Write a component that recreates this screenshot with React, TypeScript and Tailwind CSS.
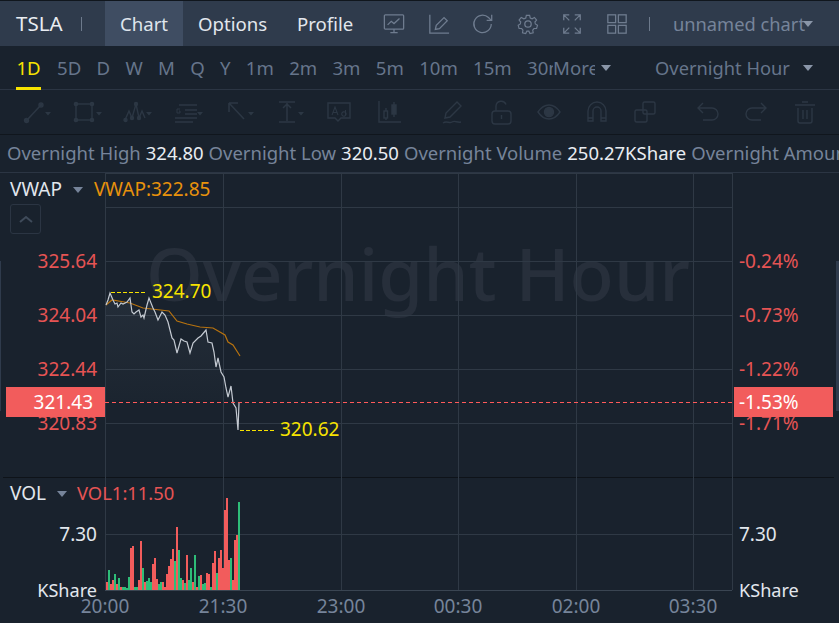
import type { ReactNode } from 'react'

const FONT = "font-['Noto_Sans','Liberation_Sans',sans-serif]"

const intervals = ['5D', 'D', 'W', 'M', 'Q', 'Y', '1m', '2m', '3m', '5m', '10m', '15m']

// white price line, in page coordinates
const pricePoints: [number, number][] = [
  [106, 305], [108, 300], [110, 293], [113, 300], [115, 304], [117, 303], [118, 307], [121, 303], [123, 304], [127, 302], [130, 298], [132, 312], [134, 314], [136, 312], [139, 310], [141, 317], [143, 315], [144, 318], [147, 305], [149, 298], [153, 308], [155, 312], [158, 320], [160, 316], [162, 312], [165, 315], [168, 322], [170, 330], [172, 338], [174, 340], [177, 353], [181, 339], [184, 341], [187, 342], [190, 353], [193, 343], [198, 338], [201, 336], [206, 330], [208, 342], [212, 343], [214, 352], [216, 367], [218, 358], [221, 372], [224, 377], [226, 388], [228, 397], [231, 386], [233, 403], [236, 408], [238, 430], [239, 403],
]

const vwapPoints: [number, number][] = [
  [106, 305], [112, 300], [130, 303], [143, 308], [169, 311], [177, 321], [187, 324], [200, 327], [213, 328], [225, 335], [228, 342], [233, 345], [240, 356],
]

const volumes: [number, 'r' | 'g'][] = [
  [8, 'r'], [20, 'g'], [6, 'r'], [10, 'r'], [16, 'g'], [6, 'r'], [12, 'g'], [3, 'r'], [3, 'g'], [3, 'g'], [2, 'g'], [13, 'g'],
  [42, 'r'], [44, 'r'], [3, 'g'], [3, 'g'], [10, 'r'], [49, 'r'], [22, 'g'], [8, 'r'], [9, 'g'], [12, 'g'], [8, 'g'], [26, 'r'],
  [32, 'r'], [11, 'r'], [6, 'g'], [8, 'g'], [8, 'r'], [3, 'r'], [16, 'r'], [24, 'r'], [31, 'r'], [41, 'r'], [29, 'g'], [63, 'r'],
  [40, 'g'], [12, 'g'], [10, 'r'], [7, 'g'], [35, 'r'], [10, 'g'], [22, 'g'], [8, 'r'], [35, 'g'], [3, 'r'], [14, 'g'], [15, 'r'],
  [6, 'g'], [7, 'g'], [17, 'r'], [16, 'r'], [3, 'g'], [27, 'r'], [39, 'r'], [17, 'g'], [32, 'r'], [40, 'r'], [22, 'r'], [80, 'r'],
  [92, 'r'], [30, 'r'], [32, 'g'], [10, 'r'], [50, 'r'], [55, 'r'], [88, 'g'],
]

const toPath = (pts: [number, number][]) => pts.map(([x, y], i) => `${i ? 'L' : 'M'}${x} ${y}`).join(' ')

function Icon({ children, size = 24 }: { children: ReactNode; size?: number }) {
  return (
    <svg className="overflow-visible" width={size} height={size} viewBox="0 0 24 24" fill="none" stroke="currentColor" strokeWidth="1.4">
      {children}
    </svg>
  )
}

function Caret({ className = '' }: { className?: string }) {
  return <span className={`inline-block w-0 h-0 border-x-[5px] border-x-transparent border-t-[6px] ${className}`} />
}

const toolCaret = <path d="M22 12h6l-3 3.500z" fill="currentColor" stroke="none" />

const topIcons = [
  <><rect x="1.500" y="2" width="21" height="15.500" rx="1" /><path d="M5 13l4-4 3 2.500 6-5.500M8 21.500h8M12 17.500v4" /></>,
  <><path d="M2 2v20h21" /><path d="M8 18l1-4.500L17.500 5l3.500 3.500-8.500 8.500z" /></>,
  <><path d="M21 12a9.500 9.500 0 1 1-3-7l3 3" /><path d="M21.500 2v6h-5.500" /></>,
  <><circle cx="12" cy="12" r="3.500" /><path d="M10 1.500h4l.7 3.200 2.300 1 2.800-1.700 2.600 3.200-2 2.400.5 2.400 2.600 1.600-1.100 3.800-3.100.1-1.600 1.900.6 3.200-3.900 1-1.400-2.900h-2.400l-1.400 2.900-3.900-1 .6-3.200-1.600-1.900-3.100-.1-1.100-3.800 2.600-1.600.5-2.400-2-2.400 2.600-3.200L7 5.700l2.300-1z" transform="translate(1.200 1.200) scale(.9)" /></>,
  <><path d="M3 8V2h6M21 8V2h-6M3 16v6h6M21 16v6h-6M3 2l6 6M21 2l-6 6M3 22l6-6M21 22l-6-6" /></>,
  <><rect x="2" y="2" width="8.500" height="8.500" /><rect x="13.500" y="2" width="8.500" height="8.500" /><rect x="2" y="13.500" width="8.500" height="8.500" /><rect x="13.500" y="13.500" width="8.500" height="8.500" /></>,
]

const toolIcons = [
  <><circle cx="3.500" cy="20.500" r="2" fill="currentColor" /><circle cx="18" cy="5" r="2" fill="currentColor" /><path d="M4 20L18 5" strokeWidth="1.600" />{toolCaret}</>,
  <><rect x="2" y="4" width="16" height="16" /><circle cx="2" cy="4" r="1.600" fill="currentColor" /><circle cx="18" cy="4" r="1.600" fill="currentColor" /><circle cx="2" cy="20" r="1.600" fill="currentColor" /><circle cx="18" cy="20" r="1.600" fill="currentColor" />{toolCaret}</>,
  <><path d="M1 20l4-9 3 7 4-14 3 14 3-7 3 7" /><circle cx="1.500" cy="20" r="1.500" fill="currentColor" /><circle cx="8" cy="18" r="1.500" fill="currentColor" /><circle cx="12" cy="4" r="1.500" fill="currentColor" /><circle cx="15" cy="18" r="1.500" fill="currentColor" />{toolCaret}</>,
  <><path d="M4 5h18M10 10h12M10 14h12M0 18h22M0 22h18" /><path d="M5 9H2v4h3v-2H4" strokeWidth="1" />{toolCaret}</>,
  <><path d="M3 3l15 16M3 3h9M3 3v9" strokeWidth="1.600" />{toolCaret}</>,
  <><path d="M3 2h16M3 22h16M11 3v18M7 8l4-4 4 4" strokeWidth="1.500" />{toolCaret}</>,
  <><path d="M1 3h22v15H14l-3 3-3-3H1z" /><path d="M5 15l3-8 3 8M6 12.500h4M18.500 10v5M18.500 12.500a2.200 2.200 0 1 1-.1-.1" strokeWidth="1.100" /></>,
  <><path d="M1 1v21h22" /><rect x="6" y="11" width="3.500" height="7" /><rect x="14" y="5" width="4" height="9" fill="currentColor" /><path d="M8 8v3M8 18v2M16 2v3M16 14v3" /></>,
  <><path d="M4 18l1-5L16 2l4 4L9 17zM2 23c4-3 6 1 9-1s5 1 9 0" /></>,
  <><rect x="3" y="11" width="19" height="13" rx="3" /><path d="M7 11V6a5.200 5.200 0 0 1 10-1.500M12.500 15v4" /></>,
  <><path d="M1 12c3-4.500 7-7 11-7s8 2.500 11 7c-3 4.500-7 7-11 7s-8-2.500-11-7z" /><circle cx="12" cy="12" r="4.500" fill="currentColor" /></>,
  <><path d="M3 21V11a9 9 0 0 1 18 0v10h-5V11a4 4 0 0 0-8 0v10z" /><path d="M3 18h5M16 18h5" /></>,
  <><rect x="2" y="10" width="12" height="12" rx="1.500" /><rect x="10" y="2" width="12" height="12" rx="1.500" /></>,
  <><path d="M7 3L2 8l5 5M2 8h14a6 6 0 0 1 6 6v0a6 6 0 0 1-6 6H7" /></>,
  <><path d="M17 3l5 5-5 5M22 8H8a6 6 0 0 0-6 6v0a6 6 0 0 0 6 6h9" /></>,
  <><path d="M2 5h20M9 2h6M5 8v13a2 2 0 0 0 2 2h10a2 2 0 0 0 2-2V8M10 10v9M14 10v9" /></>,
]

const hLines = [173, 207, 261, 315, 369, 423, 534]
const vLines = [105, 223, 341, 458, 576, 693, 732]
const timeLabels = ['20:00', '21:30', '23:00', '00:30', '02:00', '03:30']

export default function App() {
  const bars = volumes.map(([h, c], i) => ({ x: 106 + i * 2, h, c }))

  return (
    <div className={`w-[839px] h-[623px] overflow-hidden bg-[#19222d] text-[18.600px] leading-none flex flex-col ${FONT}`}>
      {/* header */}
      <div className="h-[46px] shrink-0 bg-[#2f3b4c] border-t border-[#10161d] flex items-center">
        <span className="ml-[16px] w-[65px] text-[20.500px] text-[#e9edf2]">TSLA</span>
        <span className="w-px h-[14px] bg-[#6d7a8c]" />
        <div className="ml-[23px] h-full w-[78px] flex items-center justify-center bg-[#3f4d62] text-[#dfe5ec] pt-[1px]">Chart</div>
        <span className="ml-[15px] w-[69px] text-[#e2e7ed] pt-[1px]">Options</span>
        <span className="ml-[30px] w-[55px] text-[#e2e7ed] pt-[1px]">Profile</span>
        <div className="ml-[31px] flex gap-[22.600px] text-[#6f7c8f]">
          {topIcons.map((icon, i) => (
            <Icon key={i} size={22}>{icon}</Icon>
          ))}
        </div>
        <span className="ml-[21px] w-px h-[14px] bg-[#6d7a8c]" />
        <span className="ml-[23px] text-[18.300px] pt-[1px] text-[#76849a] whitespace-nowrap w-[130px]">unnamed chart</span>
        <Caret className="border-t-[#8a96a8]" />
      </div>

      {/* interval tabs */}
      <div className="h-[44px] shrink-0 border-b border-[#2b3543] flex items-center relative text-[#66758b] pt-[1px]">
        <div className="ml-[16px] h-full w-[25px] flex items-center justify-center text-[#f7e300] border-b-[3px] border-[#f7e300] pt-[3px] -mb-px">1D</div>
        <div className="ml-[16px] flex gap-[15.300px]">
          {intervals.map((t) => (
            <span key={t}>{t}</span>
          ))}
        </div>
        <span className="ml-[15.300px] w-[26px] overflow-hidden whitespace-nowrap">30m</span>
        <span className="w-[42px] overflow-hidden whitespace-nowrap">More</span>
        <Caret className="ml-[6px] border-t-[#8a96a8]" />
        <span className="ml-[44px] text-[18.300px] whitespace-nowrap w-[134px]">Overnight Hour</span>
        <Caret className="ml-[14px] border-t-[#8a96a8]" />
      </div>

      {/* drawing tools */}
      <div className="h-[45px] shrink-0 border-b border-[#10161d] flex items-center pl-[23px] text-[#2c3744]">
        {toolIcons.slice(0, 8).map((icon, i) => (
          <div key={i} className="w-[50.700px] shrink-0">
            <Icon size={24}>{icon}</Icon>
          </div>
        ))}
        <span className="-ml-[8px] mr-[20.300px] w-px h-[28px] bg-[#212b37]" />
        {toolIcons.slice(8, 13).map((icon, i) => (
          <div key={i} className="w-[48px] shrink-0">
            <Icon size={24}>{icon}</Icon>
          </div>
        ))}
        <span className="-ml-[4px] mr-[19px] w-px h-[28px] bg-[#212b37]" />
        {toolIcons.slice(13).map((icon, i) => (
          <div key={i} className="w-[48.500px] shrink-0">
            <Icon size={24}>{icon}</Icon>
          </div>
        ))}
      </div>

      {/* quote stats */}
      <div className="h-[37px] shrink-0 flex items-center pl-[7px] pb-[1px] whitespace-nowrap overflow-hidden text-[18.500px] text-[#76849a]">
        <span>Overnight High</span>
        <span className="ml-[5px] text-[#e9edf2]">324.80</span>
        <span className="ml-[5px]">Overnight Low</span>
        <span className="ml-[5px] text-[#e9edf2]">320.50</span>
        <span className="ml-[5px]">Overnight Volume</span>
        <span className="ml-[5px] text-[#e9edf2]">250.27KShare</span>
        <span className="ml-[5px]">Overnight Amount</span>
      </div>

      {/* chart canvas */}
      <div className="relative flex-1 text-[19px]">
        <div className="absolute left-0 right-0 top-0 h-[1px] bg-[#2b3543]" />
        <span className="absolute left-[146px] top-[65px] text-[72.500px] font-medium text-[#272f3b] whitespace-nowrap">Overnight Hour</span>

        <svg className="absolute -top-[172px] left-0" width="839" height="623" viewBox="0 0 839 623" fill="none">
          <defs>
            <linearGradient id="area" x1="0" y1="0" x2="0" y2="1">
              <stop offset="0%" stopColor="#8b98a8" stopOpacity="0.10" />
              <stop offset="100%" stopColor="#8b98a8" stopOpacity="0" />
            </linearGradient>
          </defs>
          {hLines.map((y) => (
            <path key={y} d={`M105 ${y + 0.5}H732`} stroke="#2f3945" />
          ))}
          <path d="M3 477.500H834" stroke="#0e1319" />
          <path d="M105 590.500H732" stroke="#3a4552" />
          {vLines.map((x) => (
            <path key={x} d={`M${x + 0.5} 173V590`} stroke="#2f3945" />
          ))}
          <path d={`${toPath(pricePoints)} L239 400 L106 400 Z`} fill="url(#area)" />
          <path d={toPath(vwapPoints)} stroke="#b8730f" strokeWidth="1.200" />
          <path d={toPath(pricePoints)} stroke="#c4cad2" strokeWidth="1.200" />
          <path d="M105 402.500H733" stroke="#ff5a5a" strokeDasharray="4 3" />
          <path d="M111 292.500H146" stroke="#f7e300" strokeDasharray="4 2" />
          <path d="M240 430.500H274" stroke="#f7e300" strokeDasharray="4 2" />
          {bars.map((b, i) => (
            <rect key={i} x={b.x} y={590 - b.h} width="2" height={b.h} fill={b.c === 'r' ? '#f25c5c' : '#2ebd78'} />
          ))}
        </svg>

        {/* scrollbar slivers at the window edges */}
        <div className="absolute left-0 top-[89px] w-px h-[150px] bg-[#2f3b4c]" />
        <div className="absolute right-0 top-[89px] w-[3px] h-[150px] bg-[#2f3b4c]" />

        <div className="absolute left-[10px] top-[8px] flex items-center text-[#e2e7ed]">
          VWAP
          <Caret className="ml-[11px] border-x-[4px] border-t-[5px] border-t-[#76849a]" />
          <span className="ml-[11px] text-[#e8920c]">VWAP:322.85</span>
        </div>
        <div className="absolute left-[10px] top-[32px] w-[31px] h-[30px] rounded-[3px] border border-[#2b3543] flex items-center justify-center">
          <svg width="14" height="10" viewBox="0 0 14 10" fill="none" stroke="#3f4b5a" strokeWidth="2"><path d="M1 8l6-5 6 5" /></svg>
        </div>

        {[['325.64', 80], ['324.04', 134], ['322.44', 188], ['320.83', 242]].map(([v, top]) => (
          <span key={v} className="absolute right-[742px] text-[#e65454]" style={{ top: Number(top) }}>{v}</span>
        ))}
        {[['-0.24%', 80], ['-0.73%', 134], ['-1.22%', 188], ['-1.71%', 242]].map(([v, top]) => (
          <span key={v} className="absolute left-[739px] text-[#e65454]" style={{ top: Number(top) }}>{v}</span>
        ))}

        <div className="absolute left-[6px] top-[215px] w-[99px] h-[30px] bg-[#f25c5c] text-white flex items-center justify-end pr-[12px]">321.43</div>
        <div className="absolute left-[734px] top-[215px] w-[99px] h-[30px] bg-[#f25c5c] text-white flex items-center pl-[5px]">-1.53%</div>

        <span className="absolute left-[152px] top-[110px] text-[#f7e300]">324.70</span>
        <span className="absolute left-[280px] top-[248px] text-[#f7e300]">320.62</span>

        <div className="absolute left-[10px] top-[312px] flex items-center text-[#e2e7ed]">
          VOL
          <Caret className="ml-[11px] border-x-[4px] border-t-[5px] border-t-[#76849a]" />
          <span className="ml-[10px] text-[18.400px] text-[#e65454]">VOL1:11.50</span>
        </div>
        <span className="absolute right-[742px] top-[353px] text-[#e2e7ed]">7.30</span>
        <span className="absolute left-[739px] top-[353px] text-[#e2e7ed]">7.30</span>
        <span className="absolute right-[742px] top-[409px] text-[18.100px] text-[#e2e7ed]">KShare</span>
        <span className="absolute left-[739px] top-[409px] text-[18.100px] text-[#e2e7ed]">KShare</span>

        {timeLabels.map((t, i) => (
          <span key={t} className="absolute top-[425px] -translate-x-1/2 text-[#76849a]" style={{ left: vLines[i] }}>{t}</span>
        ))}
      </div>
    </div>
  )
}
